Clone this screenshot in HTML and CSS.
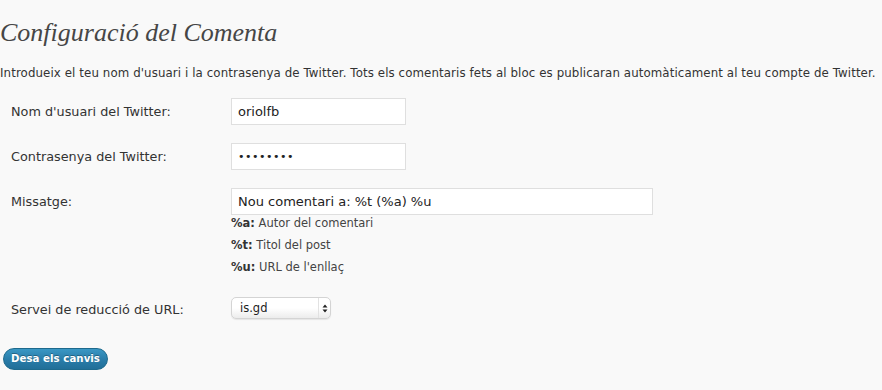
FILE: index.html
```html
<!DOCTYPE html>
<html lang="ca">

<head>
    <meta charset="UTF-8">
    <meta name="viewport" content="width=device-width, initial-scale=1.0">
    <title>Configuració del Comenta</title>
    <link rel="stylesheet" href="styles.css">
</head>

<body>
    <div class="wrap">
        <h2>Configuració del Comenta</h2>
        <p class="intro">Introdueix el teu nom d'usuari i la contrasenya de Twitter. Tots els comentaris fets al bloc es publicaran automàticament al teu compte de Twitter.</p>
        <form class="settings">
            <table class="form-table">
                <tr>
                    <th><label for="user">Nom d'usuari del Twitter:</label></th>
                    <td><input type="text" id="user" class="field" value="oriolfb"></td>
                </tr>
                <tr>
                    <th><label for="pass">Contrasenya del Twitter:</label></th>
                    <td><input type="password" id="pass" class="field" value="abcdefgh"></td>
                </tr>
                <tr>
                    <th><label for="msg">Missatge:</label></th>
                    <td>
                        <input type="text" id="msg" class="field wide" value="Nou comentari a: %t (%a) %u">
                        <div class="help">
                            <div><b>%a:</b> Autor del comentari</div>
                            <div><b>%t:</b> Titol del post</div>
                            <div><b>%u:</b> URL de l'enllaç</div>
                        </div>
                    </td>
                </tr>
                <tr>
                    <th><label for="short">Servei de reducció de URL:</label></th>
                    <td>
                        <div class="select-box">
                            <select id="short">
                                <option>is.gd</option>
                                <option>bit.ly</option>
                                <option>tinyurl</option>
                            </select>
                            <span class="arrows">
                                <svg width="6" height="9" viewBox="0 0 6 9">
                                    <path d="M0.5 3.5 L3 0.5 L5.5 3.5 Z M0.5 5.5 L3 8.5 L5.5 5.5 Z" fill="#222"/>
                                </svg>
                            </span>
                        </div>
                    </td>
                </tr>
            </table>
            <div class="submit"><a href="javascript:;" class="button-primary">Desa els canvis</a></div>
        </form>
    </div>
</body>

</html>
```

FILE: styles.css
```css
* {
    padding: 0;
    margin: 0;
    box-sizing: border-box;
}

body {
    background-color: #f9f9f9;
    color: #333;
    font-family: "DejaVu Sans", "Noto Sans", sans-serif;
    font-size: 12px;
}

.wrap {
    padding-top: 16px;
}

h2 {
    height: 34px;
    font-family: "Liberation Serif", "DejaVu Serif", serif;
    font-style: italic;
    font-weight: normal;
    font-size: 26px;
    line-height: 34px;
    color: #464646;
}

.intro {
    margin-top: 14px;
    font-size: 11.8px;
    line-height: 18px;
    letter-spacing: 0.1px;
}

.form-table {
    margin-top: 9px;
    border-collapse: collapse;
}

.form-table th,
.form-table td {
    padding: 8px 10px 11px;
    vertical-align: top;
    text-align: left;
}

.form-table th {
    width: 221px;
    padding-left: 11px;
    padding-top: 13px;
    font-weight: normal;
    font-size: 12.8px;
    line-height: 16px;
}

.form-table td {
    padding-left: 10px;
    padding-top: 7px;
}

.field {
    display: block;
    width: 175px;
    height: 27px;
    padding: 0 6px;
    border: 1px solid #dfdfdf;
    background-color: #fff;
    font-family: "DejaVu Sans", sans-serif;
    font-size: 13px;
    color: #222;
    outline: none;
}

.field.wide {
    width: 422px;
}

input[type="password"] {
    font-size: 11px;
    letter-spacing: 0.5px;
}

.help {
    margin-top: -3px;
    font-size: 11.5px;
    line-height: 22px;
    color: #444;
}

.help b {
    font-weight: bold;
    color: #333;
}

.select-box {
    display: inline-flex;
    width: 100px;
    height: 22px;
    margin-top: 1px;
    margin-bottom: -5px;
    border: 1px solid #d4d4d4;
    border-radius: 5px;
    background: linear-gradient(#fff, #fff 50%, #ececec);
    box-shadow: 0 1px 1px rgba(0, 0, 0, .08);
    vertical-align: top;
}

.select-box select {
    flex: 1;
    min-width: 0;
    padding-left: 8px;
    border: none;
    background: transparent;
    appearance: none;
    -webkit-appearance: none;
    font-family: "DejaVu Sans", sans-serif;
    font-size: 11.5px;
    color: #222;
    outline: none;
}

.arrows {
    display: flex;
    align-items: center;
    justify-content: center;
    width: 12px;
    border-left: 1px solid #e2e2e2;
}

.submit {
    padding: 19px 3px 0;
}

a {
    text-decoration: none;
}

.button-primary {
    display: inline-block;
    height: 22px;
    padding: 0 7px;
    border: 1px solid #1e6a8d;
    border-radius: 11px;
    background: linear-gradient(#3a97c4, #2a7eab 50%, #216f98);
    color: #fff;
    font-size: 10.2px;
    font-weight: bold;
    line-height: 20px;
    letter-spacing: 0.05px;
    text-shadow: 0 -1px 0 rgba(0, 0, 0, .3);
}
```
